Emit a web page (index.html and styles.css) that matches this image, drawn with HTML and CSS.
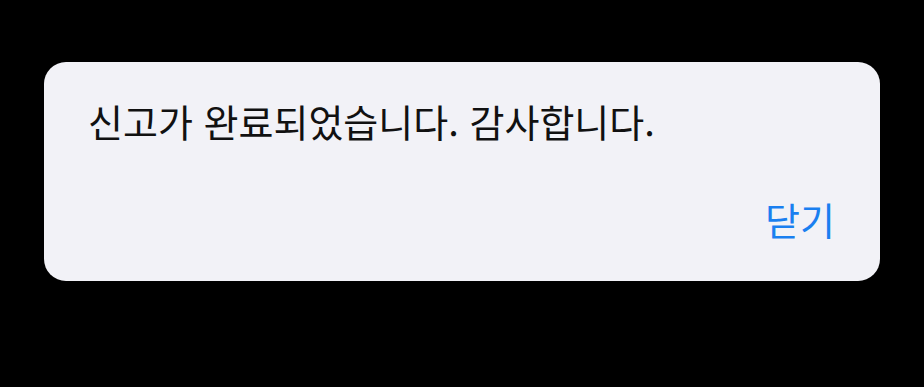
FILE: index.html
```html
<!DOCTYPE html>
<html lang="ko">
<head>
<meta charset="utf-8">
<link rel="stylesheet" href="styles.css">
</head>
<body>
<div class="page">
  <div class="dialog">
    <p class="message">신고가 완료되었습니다. 감사합니다.</p>
    <div class="actions">
      <button class="close">닫기</button>
    </div>
  </div>
</div>
</body>
</html>
```
FILE: styles.css
```css
html, body {
  margin: 0;
  padding: 0;
  background: #000;
  width: 924px;
  height: 387px;
  overflow: hidden;
}
.page {
  padding: 62px 44px 0 44px;
}
.dialog {
  background: #f2f2f7;
  border-radius: 22px;
  height: 219px;
  box-sizing: border-box;
  padding: 36px 45px 0 44px;
  display: flex;
  flex-direction: column;
  font-family: "Noto Sans CJK KR", "Noto Sans", sans-serif;
}
.message {
  margin: 0;
  font-size: 38px;
  line-height: 46px;
  color: #111;
}
.actions {
  display: flex;
  justify-content: flex-end;
  margin-top: 52px;
}
.close {
  background: none;
  border: 0;
  padding: 0;
  font-family: inherit;
  font-size: 38px;
  line-height: 46px;
  color: #1a7ff0;
}
```
